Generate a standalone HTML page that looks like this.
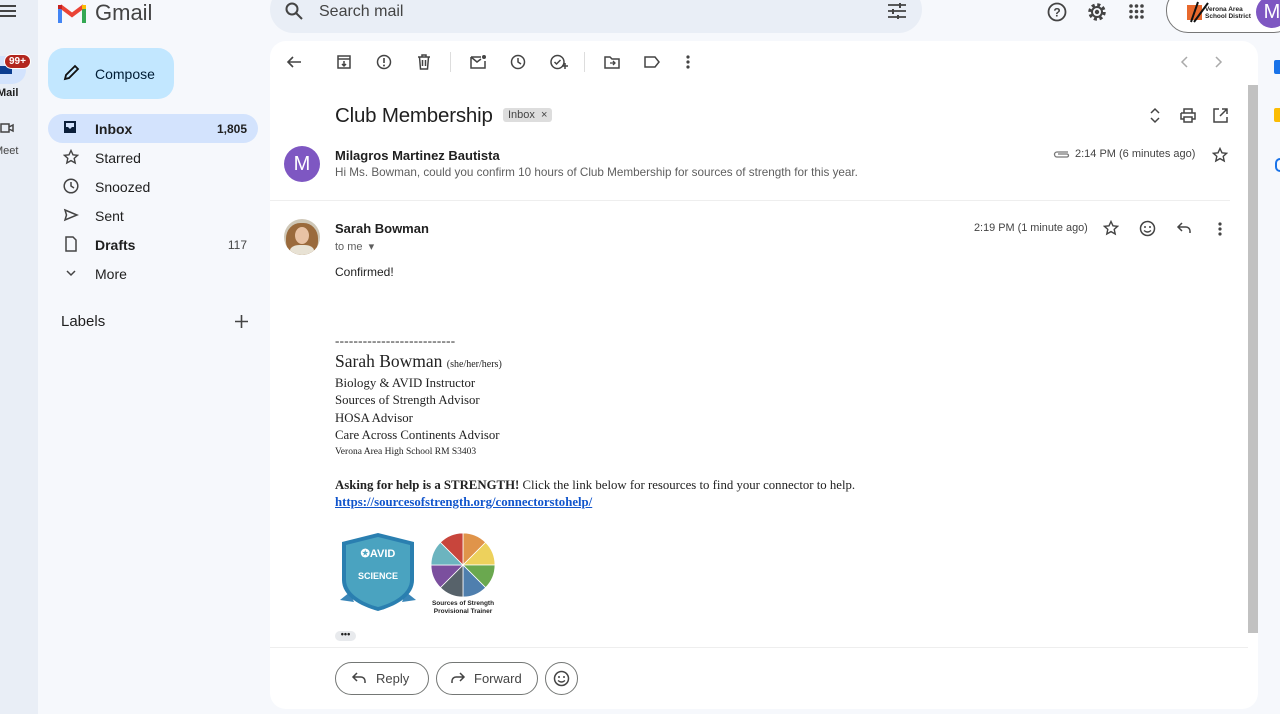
<!DOCTYPE html>
<html><head><meta charset="utf-8"><style>
*{box-sizing:border-box;margin:0;padding:0}
body{width:1280px;height:714px;overflow:hidden;background:#f6f8fc;font-family:"Liberation Sans",sans-serif;color:#1f1f1f;position:relative}
.a{position:absolute}
svg{display:block}
.nav{position:absolute;left:48px;width:210px;height:29px;font-size:14px;color:#1f1f1f}
.nav span{position:absolute;left:47px;top:7px}
.nav svg{position:absolute;left:15px;top:6px}
.nav b.c{position:absolute;right:11px;top:8px;font-size:12px}
.ser{font-family:"Liberation Serif",serif;color:#222}
.ic{position:absolute;top:54px}
</style></head><body>
<div class="a" style="left:0;top:0;width:38px;height:714px;background:#e9eef6"></div>
<svg class="a" style="left:0;top:4px" width="16" height="14"><path d="M0 2h16M0 7h16M0 12h16" stroke="#444" stroke-width="2"/></svg>
<div class="a" style="left:0;top:56px;width:26px;height:28px;background:#d3e3fd;border-radius:0 14px 14px 0"></div>
<svg class="a" style="left:0;top:64px" width="14" height="12"><path d="M0 2h12v8H0z" fill="#0b3d91"/></svg>
<div class="a" style="left:4px;top:54px;background:#b3261e;color:#fff;font-size:10px;font-weight:bold;border-radius:8px;padding:1px 4px;border:1px solid #fff">99+</div>
<div class="a" style="left:-3px;top:87px;font-size:11px;font-weight:bold">Mail</div>
<svg class="a" style="left:0;top:122px" width="14" height="12"><path d="M1 2h8v8H1zM9 5l4-2v6l-4-2" stroke="#444" fill="none" stroke-width="1.5"/></svg>
<div class="a" style="left:-6px;top:145px;font-size:11px;color:#444">Meet</div>
<svg class="a" style="left:58px;top:2px" width="28" height="21" viewBox="0 0 28 21"><path d="M2 21V5" stroke="#4285f4" stroke-width="4"/><path d="M26 21V5" stroke="#34a853" stroke-width="4"/><path d="M2 4l12 9 12-9" stroke="#ea4335" stroke-width="4" fill="none"/><path d="M26 3v4" stroke="#fbbc04" stroke-width="4"/><path d="M2 3v4" stroke="#c5221f" stroke-width="4"/></svg>
<div class="a" style="left:95px;top:0px;font-size:22px;color:#444">Gmail</div>
<div class="a" style="left:270px;top:-14px;width:652px;height:47px;background:#e9eef6;border-radius:24px"></div>
<svg class="a" style="left:285px;top:2px" width="18" height="18"><circle cx="7" cy="7" r="5.5" stroke="#444" stroke-width="2" fill="none"/><path d="M11 11l6 6" stroke="#444" stroke-width="2"/></svg>
<div class="a" style="left:319px;top:3px;font-size:16px;color:#444">Search mail</div>
<svg class="a" style="left:888px;top:3px" width="18" height="16"><path d="M0 2h18M0 8h18M0 14h18" stroke="#444" stroke-width="1.8"/><path d="M12 0v5M5 6v5M10 12v4" stroke="#444" stroke-width="2"/></svg>
<svg class="a" style="left:1047px;top:2px" width="20" height="20"><circle cx="10" cy="10" r="8.5" stroke="#444" stroke-width="1.8" fill="none"/><text x="10" y="14.5" font-size="12" text-anchor="middle" fill="#444" font-family="Liberation Sans" font-weight="bold">?</text></svg>
<svg class="a" style="left:1087px;top:2px" width="20" height="20"><circle cx="10" cy="10" r="7" stroke="#444" stroke-width="3.5" stroke-dasharray="3 2.5" fill="none"/><circle cx="10" cy="10" r="5" stroke="#444" stroke-width="2" fill="none"/><circle cx="10" cy="10" r="2.2" fill="#444"/></svg>
<svg class="a" style="left:1129px;top:4px" width="15" height="15"><g fill="#444"><circle cx="2" cy="2" r="1.8"/><circle cx="7.5" cy="2" r="1.8"/><circle cx="13" cy="2" r="1.8"/><circle cx="2" cy="7.5" r="1.8"/><circle cx="7.5" cy="7.5" r="1.8"/><circle cx="13" cy="7.5" r="1.8"/><circle cx="2" cy="13" r="1.8"/><circle cx="7.5" cy="13" r="1.8"/><circle cx="13" cy="13" r="1.8"/></g></svg>
<div class="a" style="left:1166px;top:-12px;width:130px;height:45px;border:1px solid #777;border-radius:22px;background:#fff"></div>
<div class="a" style="left:1187px;top:5px;width:15px;height:15px;background:#e8692d"></div>
<svg class="a" style="left:1188px;top:0" width="22" height="24"><path d="M3 22L10 2M6 22L20 3" stroke="#111" stroke-width="2"/></svg>
<div class="a" style="left:1205px;top:6px;font-size:6.5px;font-weight:bold;line-height:7px;color:#222">Verona Area<br>School District</div>
<div class="a" style="left:1256px;top:-4px;width:32px;height:32px;border-radius:50%;background:#7e57c2;color:#fff;font-size:20px;text-align:center;line-height:32px">M</div>
<div class="a" style="left:48px;top:48px;width:126px;height:51px;background:#c2e7ff;border-radius:16px"></div>
<svg class="a" style="left:63px;top:64px" width="17" height="17"><path d="M2 15l1-4L12 2l3 3-9 9z" stroke="#111" stroke-width="1.8" fill="none"/></svg>
<div class="a" style="left:95px;top:66px;font-size:14px;color:#001d35">Compose</div>
<div class="nav" style="top:114px;background:#d3e3fd;border-radius:15px;font-weight:bold"><svg width="14" height="14"><path d="M1 1h12v12H1z" fill="#0b1f3a"/><path d="M3 3h8v4H9l-2 2-2-2H3z" fill="#d3e3fd"/></svg><span>Inbox</span><b class="c">1,805</b></div>
<div class="nav" style="top:143px"><svg width="16" height="16"><path d="M8 1.5l2 4.3 4.6.5-3.4 3.1 1 4.6L8 11.6l-4.2 2.4 1-4.6L1.4 6.3 6 5.8z" stroke="#444" stroke-width="1.4" fill="none"/></svg><span>Starred</span></div>
<div class="nav" style="top:172px"><svg width="16" height="16"><circle cx="8" cy="8" r="6.8" stroke="#444" stroke-width="1.5" fill="none"/><path d="M8 4v4l3 2" stroke="#444" stroke-width="1.5" fill="none"/></svg><span>Snoozed</span></div>
<div class="nav" style="top:201px"><svg width="16" height="16"><path d="M2 3l12 5-12 5 1.5-5z" stroke="#444" stroke-width="1.5" fill="none"/></svg><span>Sent</span></div>
<div class="nav" style="top:230px;font-weight:bold"><svg width="16" height="16"><path d="M3 1h7l3 3v11H3z" stroke="#444" stroke-width="1.5" fill="none"/></svg><span>Drafts</span><b class="c" style="font-weight:normal;color:#444">117</b></div>
<div class="nav" style="top:259px"><svg width="16" height="16"><path d="M4 6l4 4 4-4" stroke="#444" stroke-width="1.5" fill="none"/></svg><span>More</span></div>
<div class="a" style="left:61px;top:313px;font-size:15px">Labels</div>
<svg class="a" style="left:235px;top:315px" width="13" height="13"><path d="M6.5 0v13M0 6.5h13" stroke="#444" stroke-width="1.6"/></svg>
<div class="a" style="left:270px;top:41px;width:988px;height:668px;background:#fff;border-radius:16px"></div>
<div class="a" style="left:1248px;top:85px;width:10px;height:548px;background:#c1c1c1"></div>
<div class="a" style="left:1265px;top:41px;width:15px;height:673px;background:#f6f8fc"></div>
<div class="a" style="left:1274px;top:60px;width:6px;height:14px;background:#1a73e8;border-radius:2px 0 0 2px"></div>
<div class="a" style="left:1274px;top:108px;width:6px;height:14px;background:#fbbc04;border-radius:2px 0 0 2px"></div>
<div class="a" style="left:1275px;top:158px;width:5px;height:14px;border:2px solid #1a73e8;border-right:none;border-radius:8px 0 0 8px"></div>
<svg class="ic" style="left:286px" width="16" height="16"><path d="M15 8H2M7 3L2 8l5 5" stroke="#444" stroke-width="1.6" fill="none"/></svg>
<svg class="ic" style="left:336px" width="16" height="16"><path d="M2 2h12v12H2zM2 5h12M8 7v5M6 10l2 2 2-2" stroke="#444" stroke-width="1.5" fill="none"/></svg>
<svg class="ic" style="left:376px" width="16" height="16"><circle cx="8" cy="8" r="6.5" stroke="#444" stroke-width="1.5" fill="none"/><path d="M8 4v5" stroke="#444" stroke-width="1.6"/><circle cx="8" cy="11.5" r="1" fill="#444"/></svg>
<svg class="ic" style="left:416px" width="16" height="16"><path d="M2 3h12M6 3V1h4v2M3.5 3l1 12h7l1-12M6.5 6v6M9.5 6v6" stroke="#444" stroke-width="1.5" fill="none"/></svg>
<div class="a" style="left:450px;top:52px;width:1px;height:20px;background:#ddd"></div>
<svg class="ic" style="left:470px" width="16" height="16"><path d="M1 3h10M1 3v11h14V7M1 3l6 5 4-3" stroke="#444" stroke-width="1.5" fill="none"/><circle cx="14" cy="3" r="2" fill="#444"/></svg>
<svg class="ic" style="left:510px" width="16" height="16"><circle cx="8" cy="8" r="6.5" stroke="#444" stroke-width="1.5" fill="none"/><path d="M8 4v4l3 2" stroke="#444" stroke-width="1.5" fill="none"/></svg>
<svg class="ic" style="left:550px" width="18" height="16"><circle cx="7.5" cy="8" r="6.5" stroke="#444" stroke-width="1.5" fill="none"/><path d="M4.5 8l2 2 4-4M15 9v6M12 12h6" stroke="#444" stroke-width="1.5" fill="none"/></svg>
<div class="a" style="left:584px;top:52px;width:1px;height:20px;background:#ddd"></div>
<svg class="ic" style="left:604px" width="16" height="16"><path d="M1 3h5l2 2h7v9H1z" stroke="#444" stroke-width="1.5" fill="none"/><path d="M6 9h5M9 7l2 2-2 2" stroke="#444" stroke-width="1.3" fill="none"/></svg>
<svg class="ic" style="left:644px" width="16" height="16"><path d="M1 3h10l4 5-4 5H1z" stroke="#444" stroke-width="1.5" fill="none"/></svg>
<svg class="ic" style="left:686px" width="4" height="16"><g fill="#444"><circle cx="2" cy="3" r="1.6"/><circle cx="2" cy="8" r="1.6"/><circle cx="2" cy="13" r="1.6"/></g></svg>
<svg class="ic" style="left:1179px" width="10" height="16"><path d="M8 3L3 8l5 5" stroke="#aaa" stroke-width="1.5" fill="none"/></svg>
<svg class="ic" style="left:1214px" width="10" height="16"><path d="M2 3l5 5-5 5" stroke="#aaa" stroke-width="1.5" fill="none"/></svg>
<div class="a" style="left:335px;top:104px;font-size:20.5px;color:#1f1f1f;letter-spacing:-0.2px">Club Membership</div>
<div class="a" style="left:503px;top:108px;font-size:11px;background:#ddd;color:#444;padding:1px 5px;border-radius:3px">Inbox &nbsp;×</div>
<svg class="a" style="left:1149px;top:107px" width="12" height="17"><path d="M2 6l4-4 4 4M2 11l4 4 4-4" stroke="#444" stroke-width="1.5" fill="none"/></svg>
<svg class="a" style="left:1180px;top:108px" width="16" height="15"><path d="M4 5V1h8v4M1 5h14v6h-3M4 11H1V5M4 9h8v5H4z" stroke="#444" stroke-width="1.5" fill="none"/></svg>
<svg class="a" style="left:1213px;top:108px" width="15" height="15"><path d="M6 1H1v13h13V9M9 1h5v5M14 1L7 8" stroke="#444" stroke-width="1.5" fill="none"/></svg>
<div class="a" style="left:284px;top:146px;width:36px;height:36px;border-radius:50%;background:#7e57c2;color:#fff;font-size:20px;text-align:center;line-height:36px">M</div>
<div class="a" style="left:335px;top:148px;font-size:13px;font-weight:bold">Milagros Martinez Bautista</div>
<div class="a" style="left:335px;top:166px;font-size:11.7px;color:#5e5e5e">Hi Ms. Bowman, could you confirm 10 hours of Club Membership for sources of strength for this year.</div>
<svg class="a" style="left:1053px;top:149px" width="17" height="10"><path d="M15 3H4a2.5 2.5 0 000 5h10a1.5 1.5 0 000-3H5" stroke="#777" stroke-width="1.3" fill="none"/></svg>
<div class="a" style="left:1075px;top:148px;font-size:11px;color:#444">2:14 PM (6 minutes ago)</div>
<svg class="a" style="left:1212px;top:147px" width="16" height="16"><path d="M8 1.5l2 4.3 4.6.5-3.4 3.1 1 4.6L8 11.6l-4.2 2.4 1-4.6L1.4 6.3 6 5.8z" stroke="#444" stroke-width="1.4" fill="none"/></svg>
<div class="a" style="left:270px;top:200px;width:960px;height:1px;background:#eee"></div>
<div class="a" style="left:284px;top:219px;width:36px;height:36px;border-radius:50%;overflow:hidden;background:#cfc8b8">
<div class="a" style="left:2px;top:4px;width:32px;height:34px;border-radius:45%;background:#9a6a3c"></div>
<div class="a" style="left:11px;top:8px;width:14px;height:17px;border-radius:50%;background:#e8c2a4"></div>
<div class="a" style="left:6px;top:26px;width:24px;height:14px;border-radius:40%;background:#e8e2d4"></div></div>
<div class="a" style="left:335px;top:221px;font-size:13px;font-weight:bold">Sarah Bowman</div>
<div class="a" style="left:335px;top:240px;font-size:11px;color:#5e5e5e">to me &nbsp;▾</div>
<div class="a" style="left:974px;top:222px;font-size:10.9px;color:#444">2:19 PM (1 minute ago)</div>
<svg class="a" style="left:1103px;top:220px" width="16" height="16"><path d="M8 1.5l2 4.3 4.6.5-3.4 3.1 1 4.6L8 11.6l-4.2 2.4 1-4.6L1.4 6.3 6 5.8z" stroke="#444" stroke-width="1.4" fill="none"/></svg>
<svg class="a" style="left:1139px;top:220px" width="17" height="17"><circle cx="8.5" cy="8.5" r="7" stroke="#444" stroke-width="1.5" fill="none"/><circle cx="6" cy="7" r="1" fill="#444"/><circle cx="11" cy="7" r="1" fill="#444"/><path d="M5 10.5q3.5 3 7 0" stroke="#444" stroke-width="1.4" fill="none"/></svg>
<svg class="a" style="left:1176px;top:221px" width="16" height="14"><path d="M6 2L2 6l4 4M2 6h8a4 4 0 014 4v2" stroke="#444" stroke-width="1.5" fill="none"/></svg>
<svg class="a" style="left:1218px;top:221px" width="4" height="16"><g fill="#444"><circle cx="2" cy="3" r="1.6"/><circle cx="2" cy="8" r="1.6"/><circle cx="2" cy="13" r="1.6"/></g></svg>
<div class="a" style="left:335px;top:265px;font-size:12px">Confirmed!</div>
<div class="a ser" style="left:335px;top:333px;font-size:13px;letter-spacing:0.3px">--------------------------</div>
<div class="a ser" style="left:335px;top:351px;font-size:17.5px">Sarah Bowman <span style="font-size:10px">(she/her/hers)</span></div>
<div class="a ser" style="left:335px;top:375px;font-size:12.8px;line-height:17.3px">Biology &amp; AVID Instructor<br>Sources of Strength Advisor<br>HOSA Advisor<br>Care Across Continents Advisor</div>
<div class="a ser" style="left:335px;top:447px;font-size:9.5px">Verona Area High School RM S3403</div>
<div class="a ser" style="left:335px;top:478px;font-size:12.8px"><b>Asking for help is a STRENGTH!</b> Click the link below for resources to find your connector to help.</div>
<div class="a ser" style="left:335px;top:495px;font-size:12.8px;font-weight:bold;color:#1155cc;text-decoration:underline">https://sourcesofstrength.org/connectorstohelp/</div>
<svg class="a" style="left:338px;top:532px" width="80" height="82" viewBox="0 0 80 82"><path d="M2 68l10-8 4 10zM78 68l-10-8-4 10z" fill="#3a86b8"/><path d="M40 1l36 9v38c0 16-18 26-36 31C22 74 4 64 4 48V10z" fill="#2a7fb0"/><path d="M40 5l32 8v35c0 13-16 23-32 27C24 71 8 61 8 48V13z" fill="#4aa3c0"/><text x="40" y="25" font-size="11" font-weight="bold" fill="#fff" text-anchor="middle" font-family="Liberation Sans">✪AVID</text><text x="40" y="47" font-size="9" font-weight="bold" fill="#fff" text-anchor="middle" font-family="Liberation Sans">SCIENCE</text></svg>
<svg class="a" style="left:430px;top:532px" width="66" height="66" viewBox="-33 -33 66 66">
<g stroke="#fff" stroke-width="0.8">
<path d="M0 0L0 -32A32 32 0 0 1 22.6 -22.6Z" fill="#e0944a"/>
<path d="M0 0L22.6 -22.6A32 32 0 0 1 32 0Z" fill="#edd15c"/>
<path d="M0 0L32 0A32 32 0 0 1 22.6 22.6Z" fill="#6aa84f"/>
<path d="M0 0L22.6 22.6A32 32 0 0 1 0 32Z" fill="#4f7fae"/>
<path d="M0 0L0 32A32 32 0 0 1 -22.6 22.6Z" fill="#57626a"/>
<path d="M0 0L-22.6 22.6A32 32 0 0 1 -32 0Z" fill="#7b4f9e"/>
<path d="M0 0L-32 0A32 32 0 0 1 -22.6 -22.6Z" fill="#6cb4bf"/>
<path d="M0 0L-22.6 -22.6A32 32 0 0 1 0 -32Z" fill="#c8453c"/></g></svg>
<div class="a" style="left:426px;top:600px;width:74px;text-align:center;font-size:6.5px;font-weight:bold;line-height:8px">Sources of Strength<br>Provisional Trainer</div>
<div class="a" style="left:335px;top:631px;width:21px;height:10px;background:#e8eaed;border-radius:5px;font-size:9px;line-height:6px;text-align:center;font-weight:bold">•••</div>
<div class="a" style="left:270px;top:647px;width:978px;height:1px;background:#eee"></div>
<div class="a" style="left:335px;top:662px;width:94px;height:33px;border:1px solid #747775;border-radius:17px"></div>
<svg class="a" style="left:351px;top:672px" width="16" height="13"><path d="M6 1L2 5l4 4M2 5h8a4 4 0 014 4v2" stroke="#444" stroke-width="1.5" fill="none"/></svg>
<div class="a" style="left:376px;top:671px;font-size:13px;color:#444">Reply</div>
<div class="a" style="left:436px;top:662px;width:102px;height:33px;border:1px solid #747775;border-radius:17px"></div>
<svg class="a" style="left:450px;top:672px" width="16" height="13"><path d="M10 1l4 4-4 4M14 5H6a4 4 0 00-4 4v2" stroke="#444" stroke-width="1.5" fill="none"/></svg>
<div class="a" style="left:474px;top:671px;font-size:13px;color:#444">Forward</div>
<div class="a" style="left:545px;top:662px;width:33px;height:33px;border:1px solid #747775;border-radius:50%"></div>
<svg class="a" style="left:553px;top:670px" width="17" height="17"><circle cx="8.5" cy="8.5" r="7" stroke="#444" stroke-width="1.5" fill="none"/><circle cx="6" cy="7" r="1" fill="#444"/><circle cx="11" cy="7" r="1" fill="#444"/><path d="M5 10.5q3.5 3 7 0" stroke="#444" stroke-width="1.4" fill="none"/></svg>
</body></html>
